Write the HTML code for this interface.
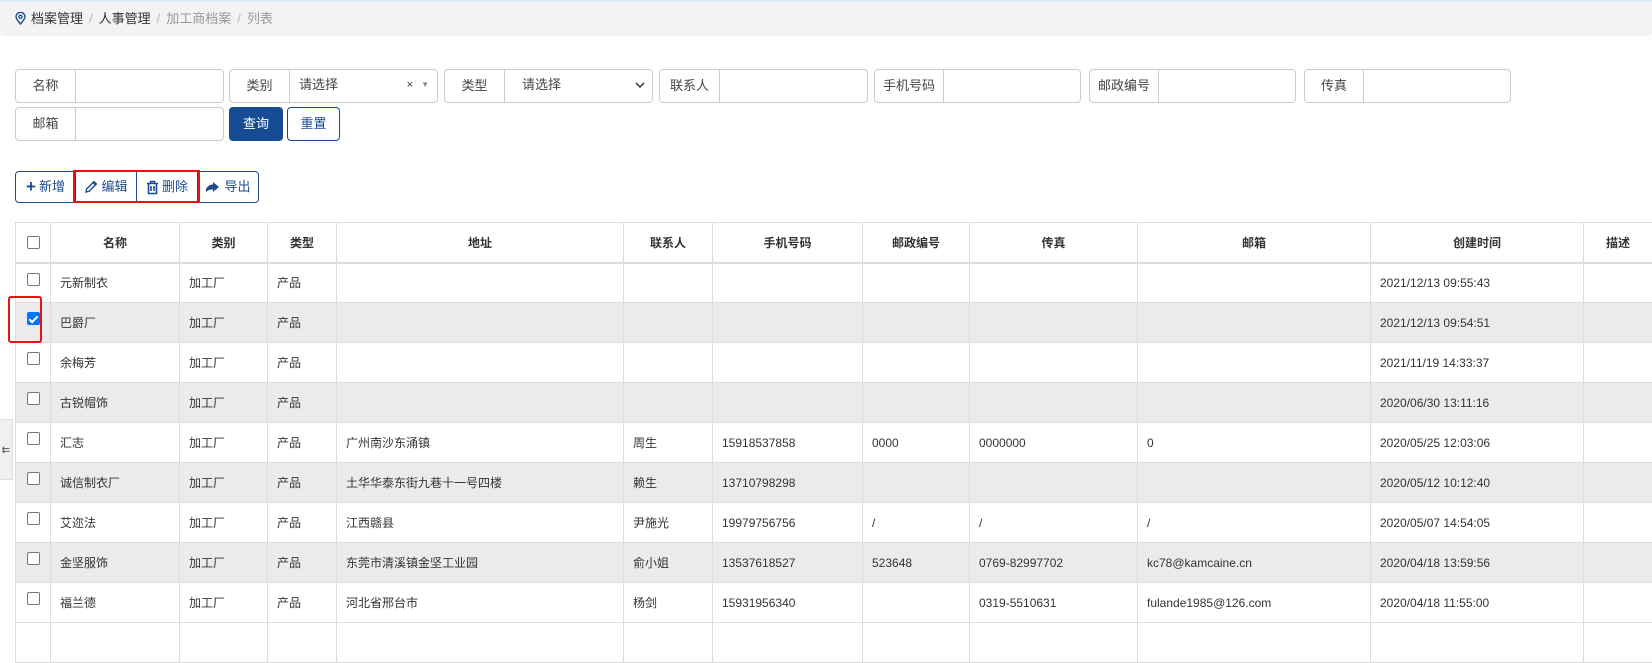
<!DOCTYPE html>
<html><head><meta charset="utf-8"><style>
*{box-sizing:border-box;margin:0;padding:0}
body{width:1652px;height:633px;overflow:hidden;background:#fff;font-family:"Liberation Sans","Noto Sans CJK SC",sans-serif;font-size:13px;color:#333;position:relative}
.bc{position:absolute;left:0;top:0;width:1652px;height:36px;background:#f3f3f3;border-top:2px solid #d6eef5;border-radius:0 0 4px 4px;font-size:13px;line-height:34px;padding-left:15px}
.bc span.s{color:#bbb;margin:0 6px}
.bc .g{color:#999}
.f{position:absolute;height:34px;border:1px solid #ccc;border-radius:4px;display:flex;background:#fff}
.f .l{border-right:1px solid #ccc;text-align:center;line-height:32px;color:#444;font-size:13px}
.f .v{flex:1;line-height:30px;padding-left:9px;color:#444;position:relative}
.btn{position:absolute;height:34px;border-radius:4px;line-height:32px;text-align:center;font-size:13px}
.tb{position:absolute;top:171px;height:32px;border:1px solid #1d4c8e;border-radius:4px;display:flex;left:15px;width:244px;color:#1d4c8e}
.tb div{height:30px;line-height:30px;text-align:center;font-size:13px;display:flex;align-items:center;justify-content:center;gap:3px}
table{position:absolute;left:15px;top:222px;border-collapse:collapse;table-layout:fixed;width:1637px}
td,th{border:1px solid #ddd;height:40px;padding:0 9px;font-size:12px;text-align:left;white-space:nowrap;overflow:hidden}
th{text-align:center;font-weight:bold;color:#333;border-bottom:2px solid #ddd}
tr.e td{background:#ebebec}
td.c,th.c{padding:0;text-align:center;vertical-align:top}
.cb{display:inline-block;width:13px;height:13px;border:1px solid #767676;border-radius:2px;margin-top:9px;background:#fff}
.cb.k{background:#0075ff;border-color:#0075ff;position:relative}
.cb.k:after{content:"";position:absolute;left:3.5px;top:0.5px;width:3px;height:7px;border:solid #fff;border-width:0 2px 2px 0;transform:rotate(45deg)}
</style></head><body>
<div class="bc"><svg width="11" height="13" viewBox="0 0 11 13" style="vertical-align:-2px;margin-right:5px"><path d="M5.5 12 C2 8 1 6.5 1 4.8 A4.5 4.5 0 0 1 10 4.8 C10 6.5 9 8 5.5 12Z" fill="none" stroke="#1d4c8e" stroke-width="1.4"/><circle cx="5.5" cy="4.8" r="1.6" fill="none" stroke="#1d4c8e" stroke-width="1.3"/></svg>档案管理<span class="s">/</span>人事管理<span class="s">/</span><span class="g">加工商档案</span><span class="s">/</span><span class="g">列表</span></div>

<div class="f" style="left:15px;top:69px;width:209px"><div class="l" style="width:60px">名称</div><div class="v"></div></div>
<div class="f" style="left:229px;top:69px;width:209px"><div class="l" style="width:60px">类别</div><div class="v">请选择<span style="position:absolute;right:24px;top:0;font-size:11px;color:#333">×</span><span style="position:absolute;right:8px;top:0;font-size:8px;color:#888">▼</span></div></div>
<div class="f" style="left:444px;top:69px;width:209px"><div class="l" style="width:60px">类型</div><div class="v" style="padding-left:17px">请选择<svg style="position:absolute;right:7px;top:11px" width="10" height="8" viewBox="0 0 10 8"><path d="M1 2 L5 6 L9 2" fill="none" stroke="#333" stroke-width="1.5"/></svg></div></div>
<div class="f" style="left:659px;top:69px;width:209px"><div class="l" style="width:60px">联系人</div><div class="v"></div></div>
<div class="f" style="left:874px;top:69px;width:207px"><div class="l" style="width:69px">手机号码</div><div class="v"></div></div>
<div class="f" style="left:1089px;top:69px;width:207px"><div class="l" style="width:69px">邮政编号</div><div class="v"></div></div>
<div class="f" style="left:1304px;top:69px;width:207px"><div class="l" style="width:59px">传真</div><div class="v"></div></div>
<div class="f" style="left:15px;top:107px;width:209px"><div class="l" style="width:60px">邮箱</div><div class="v"></div></div>
<div class="btn" style="left:229px;top:107px;width:54px;background:#174c95;color:#fff;border:1px solid #174c95">查询</div>
<div class="btn" style="left:287px;top:107px;width:53px;border:1px solid #174c95;color:#174c95">重置</div>

<div class="tb">
<div style="width:60px;border-right:1px solid #1d4c8e"><span style="font-size:17px;font-weight:bold">+</span>新增</div>
<div style="width:61px;border-right:1px solid #1d4c8e"><svg width="14" height="14" viewBox="0 0 14 14"><path d="M2 12 L2.6 9 L10 1.6 L12.4 4 L5 11.4 Z M9 2.6 L11.4 5" fill="none" stroke="#1d4c8e" stroke-width="1.4"/></svg>编辑</div>
<div style="width:61px;border-right:1px solid #1d4c8e"><svg width="13" height="15" viewBox="0 0 13 15"><path d="M1 3.5 H12 M4.5 3.5 V1.5 H8.5 V3.5 M2.5 3.5 V13.5 H10.5 V3.5 M5 6 V11 M8 6 V11" fill="none" stroke="#1d4c8e" stroke-width="1.6"/></svg>删除</div>
<div style="flex:1"><svg width="16" height="12" viewBox="0 0 16 12"><path d="M1 8 C3 4 6 3.5 8 3.5 V1 L14 6 L8 11 V8.5 C5 8.5 3 9 1 11 Z" fill="#1d4c8e"/></svg>导出</div>
</div>
<div style="position:absolute;left:73px;top:170px;width:127px;height:33px;border:2px solid #ee1111"></div>

<table>
<colgroup><col style="width:35px"><col style="width:129px"><col style="width:88px"><col style="width:69px"><col style="width:287px"><col style="width:89px"><col style="width:150px"><col style="width:107px"><col style="width:168px"><col style="width:233px"><col style="width:213px"><col style="width:69px"></colgroup>
<tr><th class="c"><span class="cb" style="margin-top:13px"></span></th><th>名称</th><th>类别</th><th>类型</th><th>地址</th><th>联系人</th><th>手机号码</th><th>邮政编号</th><th>传真</th><th>邮箱</th><th>创建时间</th><th>描述</th></tr>
<tr><td class="c"><span class="cb"></span></td><td>元新制衣</td><td>加工厂</td><td>产品</td><td></td><td></td><td></td><td></td><td></td><td></td><td>2021/12/13 09:55:43</td><td></td></tr>
<tr class="e"><td class="c"><span class="cb k"></span></td><td>巴爵厂</td><td>加工厂</td><td>产品</td><td></td><td></td><td></td><td></td><td></td><td></td><td>2021/12/13 09:54:51</td><td></td></tr>
<tr><td class="c"><span class="cb"></span></td><td>余梅芳</td><td>加工厂</td><td>产品</td><td></td><td></td><td></td><td></td><td></td><td></td><td>2021/11/19 14:33:37</td><td></td></tr>
<tr class="e"><td class="c"><span class="cb"></span></td><td>古锐帽饰</td><td>加工厂</td><td>产品</td><td></td><td></td><td></td><td></td><td></td><td></td><td>2020/06/30 13:11:16</td><td></td></tr>
<tr><td class="c"><span class="cb"></span></td><td>汇志</td><td>加工厂</td><td>产品</td><td>广州南沙东涌镇</td><td>周生</td><td>15918537858</td><td>0000</td><td>0000000</td><td>0</td><td>2020/05/25 12:03:06</td><td></td></tr>
<tr class="e"><td class="c"><span class="cb"></span></td><td>诚信制衣厂</td><td>加工厂</td><td>产品</td><td>土华华泰东街九巷十一号四楼</td><td>赖生</td><td>13710798298</td><td></td><td></td><td></td><td>2020/05/12 10:12:40</td><td></td></tr>
<tr><td class="c"><span class="cb"></span></td><td>艾迩法</td><td>加工厂</td><td>产品</td><td>江西赣县</td><td>尹施光</td><td>19979756756</td><td>/</td><td>/</td><td>/</td><td>2020/05/07 14:54:05</td><td></td></tr>
<tr class="e"><td class="c"><span class="cb"></span></td><td>金坚服饰</td><td>加工厂</td><td>产品</td><td>东莞市清溪镇金坚工业园</td><td>俞小姐</td><td>13537618527</td><td>523648</td><td>0769-82997702</td><td>kc78@kamcaine.cn</td><td>2020/04/18 13:59:56</td><td></td></tr>
<tr><td class="c"><span class="cb"></span></td><td>福兰德</td><td>加工厂</td><td>产品</td><td>河北省邢台市</td><td>杨剑</td><td>15931956340</td><td></td><td>0319-5510631</td><td>fulande1985@126.com</td><td>2020/04/18 11:55:00</td><td></td></tr>
<tr><td class="c"></td><td></td><td></td><td></td><td></td><td></td><td></td><td></td><td></td><td></td><td></td><td></td></tr>
</table>
<div style="position:absolute;left:8px;top:296px;width:34px;height:47px;border:2px solid #ee1111;border-radius:3px"></div>
<div style="position:absolute;left:0;top:419px;width:13px;height:61px;background:#f0f0f0;border:1px solid #ddd;border-left:none;font-size:10px;line-height:61px;text-align:center;color:#555">⇇</div>
</body></html>
